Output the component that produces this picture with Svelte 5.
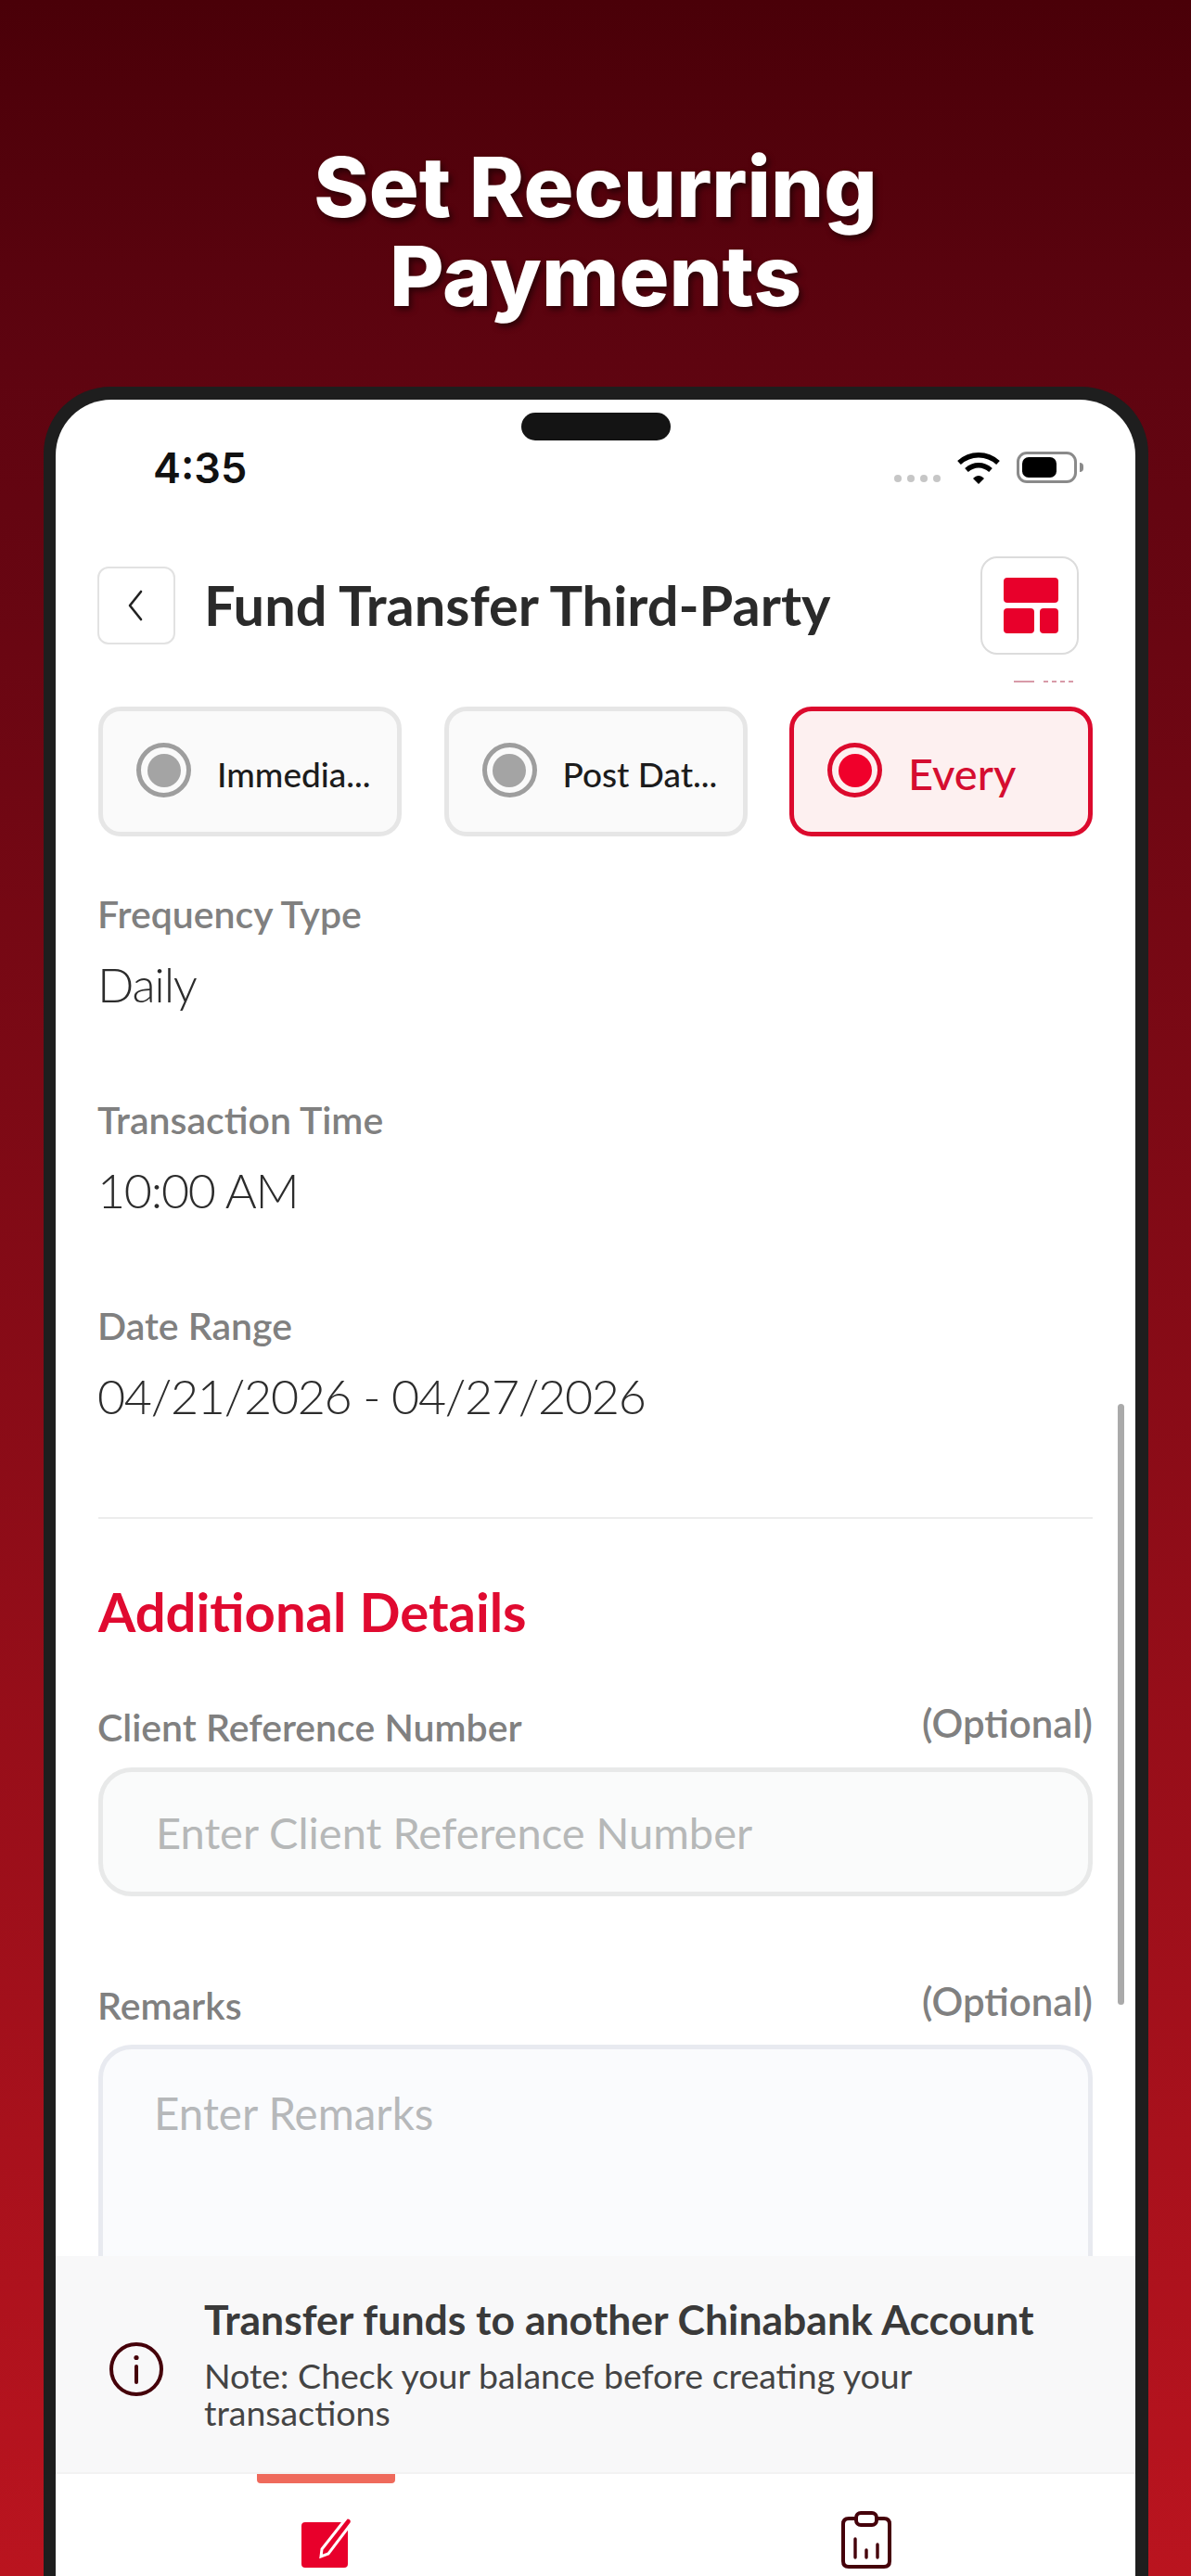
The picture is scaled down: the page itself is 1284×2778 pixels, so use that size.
<script lang="ts">
  const modes = [
    { label: 'Immedia...', active: false },
    { label: 'Post Dat...', active: false },
    { label: 'Every', active: true }
  ]
  const fields = [
    { label: 'Frequency Type', value: 'Daily' },
    { label: 'Transaction Time', value: '10:00 AM' },
    { label: 'Date Range', value: '04/21/2026 - 04/27/2026' }
  ]
</script>

<div class="page">
  <h1 class="headline">Set Recurring<br />Payments</h1>

  <div class="phone">
    <div class="screen">
      <div class="island"></div>

      <div class="status">
        <span class="time">4:35</span>
        <div class="status-icons">
          <span class="dots"><i></i><i></i><i></i><i></i></span>
          <svg class="wifi" viewBox="0 0 48 36" fill="none" stroke="#000" stroke-width="5.5">
            <path d="M3 12C15 1 33 1 45 12" />
            <path d="M11 20C19 13 29 13 37 20" />
            <path d="M18 29L24 35L30 29C26 25 22 25 18 29Z" fill="#000" stroke="none" />
          </svg>
          <span class="battery"><b></b></span>
          <span class="nub"></span>
        </div>
      </div>

      <div class="nav">
        <button class="back" aria-label="Back">
          <svg viewBox="0 0 24 36" width="24" height="36" fill="none" stroke="#222" stroke-width="2.6" stroke-linecap="round" stroke-linejoin="round">
            <path d="M17 3L5 18L17 33" />
          </svg>
        </button>
        <span class="nav-title">Fund Transfer Third-Party</span>
        <button class="layout" aria-label="Layout">
          <span class="lay-top"></span>
          <span class="lay-a"></span>
          <span class="lay-b"></span>
        </button>
      </div>

      <div class="content">
        <span class="peek"><i class="w1"></i><i></i><i></i><i></i><i></i></span>

        <div class="modes">
          {#each modes as m}
            <div class="mode" class:active={m.active}>
              <span class="radio"><span></span></span>
              <span class="mode-label">{m.label}</span>
            </div>
          {/each}
        </div>

        {#each fields as f}
          <div class="field">
            <div class="label">{f.label}</div>
            <div class="value">{f.value}</div>
          </div>
        {/each}

        <div class="divider"></div>

        <h2 class="section">Additional Details</h2>

        <div class="label-row">
          <span class="label">Client Reference Number</span>
          <span class="opt">(Optional)</span>
        </div>
        <div class="input">Enter Client Reference Number</div>

        <div class="label-row remarks">
          <span class="label">Remarks</span>
          <span class="opt">(Optional)</span>
        </div>
        <div class="textarea">Enter Remarks</div>

        <div class="scrollbar"></div>
      </div>

      <div class="note">
        <svg class="info" viewBox="0 0 60 60" fill="none" stroke="#45000a" stroke-width="4">
          <circle cx="30" cy="30" r="27" />
          <path d="M30 27V44" stroke-linecap="round" />
          <circle cx="30" cy="17.5" r="2.6" fill="#45000a" stroke="none" />
        </svg>
        <div>
          <div class="note-title">Transfer funds to another Chinabank Account</div>
          <div class="note-text">Note: Check your balance before creating your transactions</div>
        </div>
      </div>

      <div class="tabs">
        <div class="tab">
          <span class="tab-bar"></span>
          <svg class="tab-edit" viewBox="0 0 58 56" fill="none">
            <rect x="0" y="7" width="50" height="49" rx="4" fill="#e8002b" />
            <path d="M22 36L48 3C50 0 56 4 54 8L29 41L21 44Z" fill="#e8002b" stroke="#fff" stroke-width="3" />
          </svg>
        </div>
        <div class="tab">
          <svg class="tab-report" viewBox="0 0 54 62" fill="none" stroke="#45000a" stroke-width="4" stroke-linecap="round">
            <path d="M16 8H8C4 8 2 10 2 14V54C2 58 4 60 8 60H46C50 60 52 58 52 54V14C52 10 50 8 46 8H38" />
            <rect x="16" y="2" width="22" height="13" rx="5" />
            <path d="M15 30V50M27 42V50M39 36V50" stroke-width="3.4" />
          </svg>
        </div>
      </div>
    </div>
  </div>
</div>

<style>
:global(body) { margin: 0; }
.page {
  width: 1284px; height: 2778px; overflow: hidden; box-sizing: border-box;
  background: linear-gradient(180deg, #4a0008 0%, #5e0410 14%, #ba141f 100%);
  font-family: Lato, "Noto Sans", sans-serif;
  padding-top: 154px;
}
.headline {
  margin: 0; text-align: center; color: #fff;
  font: 800 90px/96px Inter, sans-serif;
  text-shadow: 3px 4px 6px rgba(0,0,0,.5);
}
.phone {
  margin: 71px 46px 0 47px; height: 2361px; box-sizing: border-box;
  background: #1e1e1e; border-radius: 72px 72px 0 0; padding: 14px 14px 0 13px;
}
.screen {
  position: relative; height: 100%; background: #fff;
  border-radius: 60px 60px 0 0; overflow: hidden;
  display: flex; flex-direction: column;
}
.island {
  position: absolute; left: 502px; top: 14px; width: 161px; height: 30px;
  background: #141414; border-radius: 15px;
}
.status {
  height: 148px; flex: 0 0 auto; box-sizing: border-box;
  display: flex; justify-content: space-between; padding: 47px 56px 0 105px;
}
.time { font: 600 45px/54px Inter, sans-serif; color: #111; }
.status-icons { display: flex; align-items: flex-start; padding-top: 9px; }
.dots { display: flex; gap: 6px; margin: 25px 17px 0 0; }
.dots i { width: 8px; height: 8px; border-radius: 50%; background: #c6c6c6; }
.wifi { width: 48px; height: 36px; margin-right: 17px; }
.battery {
  width: 65px; height: 34px; box-sizing: border-box; border: 3px solid #8a8a8a;
  border-radius: 11px; padding: 3px;
}
.battery b { display: block; width: 37px; height: 22px; background: #000; border-radius: 7px; }
.nub { width: 4px; height: 10px; margin: 12px 0 0 3px; background: #8a8a8a; border-radius: 0 4px 4px 0; }

.nav {
  height: 147px; flex: 0 0 auto; display: flex; align-items: center;
  padding: 0 61px 0 45px; box-sizing: border-box;
}
.back {
  width: 84px; height: 84px; flex: 0 0 auto; padding: 0; background: #fff;
  border: 2px solid #e2e2e2; border-radius: 12px; display: flex; align-items: center; justify-content: center;
}
.nav-title {
  margin: -2px 0 0 31px; font-size: 59.5px; font-weight: 700; color: #2a2a2a; white-space: nowrap; flex: 1;
}
.layout {
  width: 106px; height: 106px; flex: 0 0 auto; background: #fff; padding: 21px 22px 21px 23px;
  border: 2px solid #dcdcdc; border-radius: 18px; box-sizing: border-box;
  display: grid; grid-template-columns: 33px 20px; grid-template-rows: 27px 27px; gap: 6px;
}
.layout span { background: #e8002b; border-radius: 4px; }
.lay-top { grid-column: 1 / 3; }

.content { position: relative; flex: 1; min-height: 0; overflow: hidden; padding: 36px 46px 0; }
.peek { position: absolute; left: 1033px; top: 8px; display: flex; gap: 4px; }
.peek i { width: 5px; height: 2px; background: #d89aa8; }
.peek .w1 { width: 22px; margin-right: 6px; }

.modes { display: grid; grid-template-columns: repeat(3, 327px); column-gap: 45.5px; }
.mode {
  height: 140px; box-sizing: border-box; border: 5px solid #e6e6e6; border-radius: 24px;
  background: #fafafa; display: flex; align-items: center; padding-left: 36px; gap: 28px;
}
.radio {
  width: 59px; height: 59px; box-sizing: border-box; border: 5px solid #9e9e9e; border-radius: 50%;
  display: flex; align-items: center; justify-content: center; margin-top: -3px;
}
.radio span { width: 36px; height: 36px; border-radius: 50%; background: #a4a4a4; }
.mode-label { font-size: 37px; font-weight: 500; color: #1c1c1c; margin-top: 4px; }
.mode.active { border-color: #dc0a2d; background: #fdf0f0; }
.active .radio { border-color: #dc0a2d; }
.active .radio span { background: #f0002b; }
.active .mode-label { font-size: 47px; color: #d50d30; }

.field { margin-top: 93px; }
.modes + .field { margin-top: 60px; }
.label { margin-left: -1px; font-size: 41px; line-height: 48px; font-weight: 600; color: #808080; }
.value { margin: 21px 0 0 -1px; font-size: 52px; line-height: 60px; font-weight: 300; letter-spacing: -1.3px; color: #2c2c2c; }
.divider { height: 2px; background: #ececec; margin-top: 101px; }
.section { margin: 67px 0 0; font-size: 58px; line-height: 66px; font-weight: 700; color: #e00a30; }
.label-row { display: flex; justify-content: space-between; margin-top: 68px; }
.opt { font-size: 42px; line-height: 48px; font-weight: 600; color: #808080; margin-top: -5px; }
.input {
  margin-top: 19px; height: 139px; box-sizing: border-box; border: 5px solid #e8e9e9; border-radius: 36px;
  background: #fafbfb; padding-left: 57px; display: flex; align-items: center;
  font-size: 47px; color: #b6b8b8;
}
.remarks { margin-top: 94px; }
.textarea {
  margin-top: 18px; height: 400px; box-sizing: border-box; border: 5px solid #e8eaf0; border-radius: 36px;
  background: #fafbfd; padding: 41px 0 0 55px; font-size: 47.5px; line-height: 56px; color: #b6b8ba;
}
.scrollbar {
  position: absolute; left: 1145px; top: 788px; width: 7px; height: 648px;
  background: #aaa; border-radius: 4px;
}

.note {
  height: 235px; flex: 0 0 auto; box-sizing: border-box; background: #f8f8f9;
  display: flex; align-items: center; gap: 43px; padding: 0 60px 4px 57px;
  border-bottom: 2px solid #f2f2f2;
}
.info { width: 60px; height: 60px; flex: 0 0 auto; margin-top: 14px; }
.note-title { font-size: 44.5px; line-height: 54px; font-weight: 700; color: #3a3a3a; white-space: nowrap; }
.note-text { margin-top: 14px; font-size: 37.5px; line-height: 40px; color: #444; width: 800px; }

.tabs { flex: 0 0 110px; display: grid; grid-template-columns: 1fr 1fr; }
.tab { position: relative; }
.tab-bar {
  position: absolute; left: 217px; top: 0; width: 149px; height: 10px;
  background: #ef6a5c; border-radius: 0 0 4px 4px;
}
.tab-edit { position: absolute; left: 265px; top: 45px; width: 58px; height: 56px; }
.tab-report { position: absolute; left: 265px; top: 40px; width: 54px; height: 62px; }
</style>
